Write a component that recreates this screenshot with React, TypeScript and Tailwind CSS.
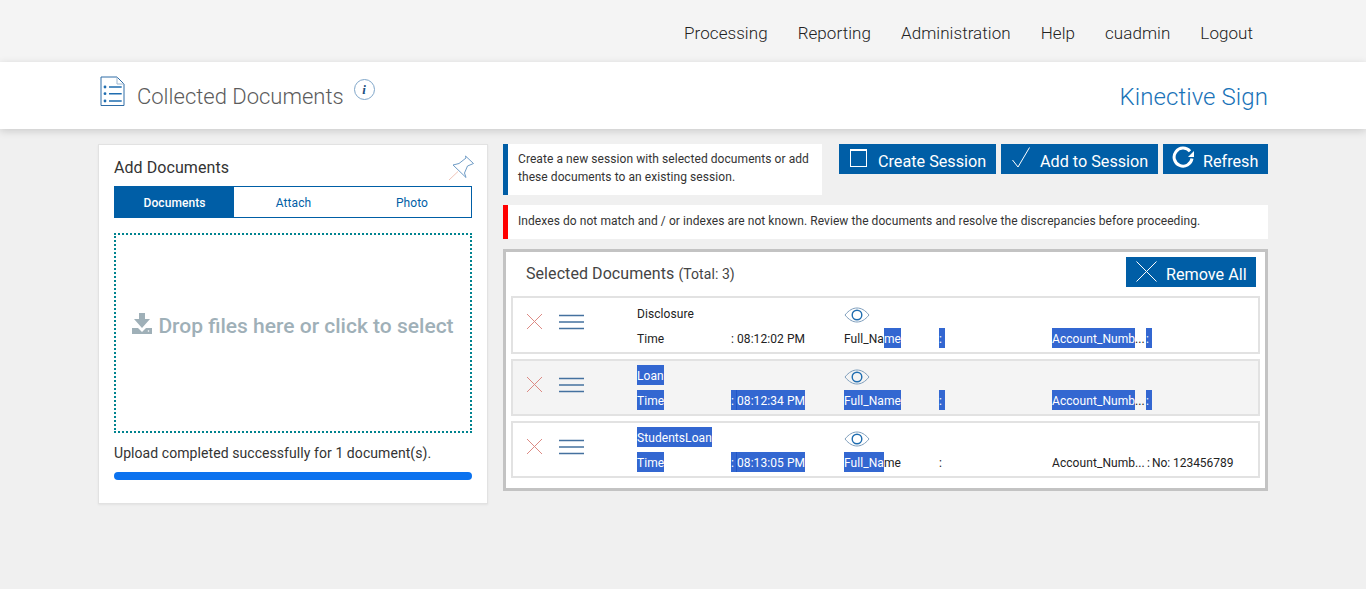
import React from "react";

const Sel = ({ children, className = "" }: { children: React.ReactNode; className?: string }) => (
  <span className={`inline-block h-5 bg-[#3367d1] leading-[22px] text-white ${className}`}>{children}</span>
);

const Cell = ({ children, className = "" }: { children?: React.ReactNode; className?: string }) => (
  <div className={`h-5 whitespace-nowrap leading-[22px] ${className}`}>{children}</div>
);

const CrossIcon = () => (
  <svg width="17" height="17" viewBox="0 0 17 17" className="shrink-0">
    <path d="M1 1L16 16M16 1L1 16" stroke="#dc8a84" strokeWidth="1" fill="none" />
  </svg>
);

const MenuIcon = () => (
  <svg width="26" height="16" viewBox="0 0 26 16" className="mt-[1px] shrink-0">
    <path d="M0 1.5H25M0 8H25M0 14.5H25" stroke="#44719f" strokeWidth="1.4" fill="none" />
  </svg>
);

const EyeIcon = () => (
  <svg width="26" height="16" viewBox="0 0 26 16" className="block">
    <path d="M1 8C5 3 9 1 13 1s8 2 12 7c-4 5-8 7-12 7S5 13 1 8Z" stroke="#7f9fbd" strokeWidth="1" fill="none" />
    <circle cx="13" cy="8" r="4.8" stroke="#1f6db0" strokeWidth="1.4" fill="none" />
  </svg>
);

const SelColon = () => <Sel className="w-[6px]">:</Sel>;

const SelTime = ({ value }: { value: string }) => (
  <Cell className="flex">
    <Sel className="w-[5px]">:</Sel>
    <Sel className="border-l border-[#1f55c8]">{value}</Sel>
  </Cell>
);

type RowProps = {
  name: React.ReactNode;
  time: React.ReactNode;
  fullName: React.ReactNode;
  colon: React.ReactNode;
  account: React.ReactNode;
  value: React.ReactNode;
  gray?: boolean;
  height: string;
  top: string;
};

const DocRow = ({ name, time, fullName, colon, account, value, gray, height, top }: RowProps) => (
  <div className={`flex border-2 border-[#e2e2e2] pl-[13px] ${height} ${gray ? "bg-[#f4f4f4]" : "bg-white"}`}>
    <div className="flex w-[111px] shrink-0 items-start gap-[16px] pt-[15px]">
      <CrossIcon />
      <MenuIcon />
    </div>
    <div className={`text-xs text-[#222] ${top}`}>
      <div className="grid grid-cols-[94px_113px_95px_113px_94px_100px]">
        <Cell className="col-span-2">{name}</Cell>
        <div className="col-span-4 h-5 pt-[4px]">
          <EyeIcon />
        </div>
      </div>
      <div className="mt-[5px] grid grid-cols-[94px_113px_95px_113px_94px_100px]">
        {time}
        {fullName}
        {colon}
        {account}
        {value}
      </div>
    </div>
  </div>
);

const AccountLabel = ({ selected }: { selected: boolean }) => (
  <Cell>
    {selected ? <Sel>Account_Numb</Sel> : "Account_Numb"}...
  </Cell>
);

export default function App() {
  return (
    <div className="h-[589px] overflow-hidden bg-[#f0f0f0] font-['Roboto',sans-serif] text-[#222]">
      <nav className="flex h-[62px] items-center justify-end gap-[30px] bg-[#f4f4f4] pr-[113px] pt-[6px] text-[17px] font-light tracking-[0.06px] text-[#222]">
        <a>Processing</a>
        <a>Reporting</a>
        <a>Administration</a>
        <a>Help</a>
        <a>cuadmin</a>
        <a>Logout</a>
      </nav>

      <header className="h-[67px] bg-white shadow-[0_2px_8px_rgba(0,0,0,0.16)]">
        <div className="mx-auto flex h-full w-[1170px] items-start justify-between">
          <div className="flex items-start">
            <svg width="26" height="31" viewBox="0 0 26 31" className="ml-[2px] mt-[14px]">
              <path d="M1 1H17L24 8V29.5H1Z" stroke="#2f6ca6" strokeWidth="1" fill="none" />
              <path d="M17 1V8H24" stroke="#9db7d0" strokeWidth="1" fill="none" />
              <path d="M9 11H21.7M9 17.7H21.7M9 25H21.7" stroke="#1f6db0" strokeWidth="1.5" fill="none" />
              <circle cx="5" cy="11" r="1.4" fill="#1f6db0" />
              <circle cx="5" cy="17.7" r="1.4" fill="#1f6db0" />
              <circle cx="5" cy="25" r="1.4" fill="#1f6db0" />
            </svg>
            <h1 className="ml-[11px] mt-[21px] text-[22px] font-light leading-[28px] text-[#5c5c5c]">Collected Documents</h1>
            <div className="ml-[10px] mt-[17px] flex h-[21px] w-[21px] items-center justify-center rounded-full border border-[#7fa6c9] font-['Liberation_Serif',serif] text-[13px] font-bold italic text-[#1b4f80]">
              i
            </div>
          </div>
          <div className="mt-[20px] text-2xl font-light leading-[30px] tracking-[0.08px] text-[#1a73b8]">Kinective Sign</div>
        </div>
      </header>

      <main className="mx-auto mt-[15px] flex w-[1170px] items-start gap-[15px] tracking-[0.07px]">
        <section className="h-[360px] w-[390px] shrink-0 border border-[#e2e2e2] bg-white px-[15px] pt-[12px] shadow-[0_1px_2px_rgba(0,0,0,0.06)]">
          <div className="flex h-[29px] items-start justify-between">
            <h2 className="text-base font-normal leading-[22px] text-[#333]">Add Documents</h2>
            <svg width="27" height="26" viewBox="3 5 27 26" className="-mr-[3px] -mt-[2px]">
              <path d="M4 30L13 21.5" stroke="#efc4b8" strokeWidth="1" fill="none" />
              <path d="M20.5 6L28.5 13.5L22.5 16L19.5 23L21 27.5L8 15L14 13.5L21 8Z" stroke="#6f9cc6" strokeWidth="1" fill="none" />
            </svg>
          </div>
          <div className="flex h-8 border border-[#005ea6] text-xs">
            <div className="flex w-[119px] items-center justify-center bg-[#005ea6] pt-[1px] font-medium text-white">Documents</div>
            <div className="flex w-[119px] items-center justify-center pt-[1px] text-[#005ea6]">Attach</div>
            <div className="flex w-[118px] items-center justify-center pt-[1px] text-[#005ea6]">Photo</div>
          </div>
          <div className="mt-[15px] flex h-[200px] items-center justify-center gap-[6px] border-2 border-dotted border-[#00838f] pb-[12px]">
            <svg width="20" height="21" viewBox="0 0 20 21" className="-mt-[8px]">
              <path d="M7 0H13V6H18L10 15L2 6H7Z" fill="#9fb0b8" />
              <path d="M0 15H6L10 19L14 15H20V21H0Z" fill="#9fb0b8" />
              <circle cx="16.5" cy="18" r="0.8" fill="#fff" />
            </svg>
            <span className="text-[21px] font-medium tracking-normal text-[#9fb0b8]">Drop files here or click to select</span>
          </div>
          <p className="mt-[10px] text-sm leading-5 text-[#333]">Upload completed successfully for 1 document(s).</p>
          <div className="mt-[9px] h-2 rounded-full bg-[#0b72ef]" />
        </section>

        <section className="min-w-0 flex-1">
          <div className="flex items-start justify-between">
            <div className="h-[51px] w-[319px] border-l-[5px] border-[#005ea6] bg-white pl-[10px] pt-[6px] text-xs leading-[18px] text-[#333]">
              Create a new session with selected documents or add these documents to an existing session.
            </div>
            <div className="flex gap-[5px]">
              <button className="flex h-[30px] w-[157px] items-center bg-[#005ea6] pl-[11px] text-[16.2px] font-normal tracking-normal text-white">
                <svg width="17" height="18" viewBox="0 0 17 18" className="-mt-[2px]">
                  <rect x="0.5" y="0.5" width="16" height="17" stroke="#fff" fill="none" />
                  <path d="M0 1H17" stroke="#fff" strokeWidth="2" />
                </svg>
                <span className="ml-[11px] mt-[6px]">Create Session</span>
              </button>
              <button className="flex h-[30px] w-[157px] items-center bg-[#005ea6] pl-[11px] text-[16.2px] font-normal tracking-normal text-white">
                <svg width="18" height="21" viewBox="0 0 18 21" className="-mt-[3px]">
                  <path d="M0.5 13L6 20L17.5 0.5" stroke="#fff" strokeWidth="1" fill="none" />
                </svg>
                <span className="ml-[10px] mt-[6px]">Add to Session</span>
              </button>
              <button className="flex h-[30px] w-[105px] items-center bg-[#005ea6] pl-[9px] text-[16.2px] font-normal tracking-normal text-white">
                <svg width="23" height="23" viewBox="0 0 23 23" className="-mt-[3px]">
                  <path d="M20 12.5A9 9 0 1 1 18 5.3" stroke="#fff" strokeWidth="3" fill="none" />
                  <path d="M22 5V11H16Z" fill="#fff" />
                </svg>
                <span className="ml-[8px] mt-[6px]">Refresh</span>
              </button>
            </div>
          </div>

          <div className="mt-[10px] flex h-[34px] items-center border-l-[5px] border-[#ff0000] bg-white pb-[2px] pl-[10px] text-xs text-[#333]">
            Indexes do not match and / or indexes are not known. Review the documents and resolve the discrepancies before proceeding.
          </div>

          <div className="mt-[10px] h-[242px] border-[3px] border-[#c3c3c3] bg-white px-[5px]">
            <div className="flex h-[44px] items-start justify-between pl-[15px] pr-[4px]">
              <div className="pt-[12px] text-base leading-5 text-[#444]">
                Selected Documents <span className="text-sm">(Total: 3)</span>
              </div>
              <button className="mt-[5px] flex h-[30px] w-[130px] items-center bg-[#005ea6] pl-[10px] text-[16.2px] font-normal tracking-normal text-white">
                <svg width="21" height="21" viewBox="0 0 21 21" className="-mt-[1px]">
                  <path d="M0.5 0.5L20.5 20.5M20.5 0.5L0.5 20.5" stroke="#fff" strokeWidth="1" fill="none" />
                </svg>
                <span className="ml-[9px] mt-[7px]">Remove All</span>
              </button>
            </div>

            <div className="flex flex-col gap-[5px]">
              <DocRow
                height="h-[58px]"
                top="pt-[5px]"
                name="Disclosure"
                time={
                  <>
                    <Cell>Time</Cell>
                    <Cell className="flex">
                      <span className="inline-block w-[6px]">:</span>08:12:02 PM
                    </Cell>
                  </>
                }
                fullName={
                  <Cell>
                    Full_Na<Sel>me</Sel>
                  </Cell>
                }
                colon={
                  <Cell>
                    <SelColon />
                  </Cell>
                }
                account={<AccountLabel selected />}
                value={
                  <Cell>
                    <SelColon />
                  </Cell>
                }
              />
              <DocRow
                gray
                height="h-[57px]"
                top="pt-[4px]"
                name={<Sel>Loan</Sel>}
                time={
                  <>
                    <Cell>
                      <Sel>Time</Sel>
                    </Cell>
                    <SelTime value="08:12:34 PM" />
                  </>
                }
                fullName={
                  <Cell>
                    <Sel>Full_Name</Sel>
                  </Cell>
                }
                colon={
                  <Cell>
                    <SelColon />
                  </Cell>
                }
                account={<AccountLabel selected />}
                value={
                  <Cell>
                    <SelColon />
                  </Cell>
                }
              />
              <DocRow
                height="h-[57px]"
                top="pt-[4px]"
                name={<Sel>StudentsLoan</Sel>}
                time={
                  <>
                    <Cell>
                      <Sel>Time</Sel>
                    </Cell>
                    <SelTime value="08:13:05 PM" />
                  </>
                }
                fullName={
                  <Cell>
                    <Sel>Full_Na</Sel>me
                  </Cell>
                }
                colon={<Cell>:</Cell>}
                account={<AccountLabel selected={false} />}
                value={
                  <Cell className="flex pl-[1px] tracking-[-0.05px]">
                    <span className="inline-block w-[5px]">:</span>No: 123456789
                  </Cell>
                }
              />
            </div>
          </div>
        </section>
      </main>
    </div>
  );
}
